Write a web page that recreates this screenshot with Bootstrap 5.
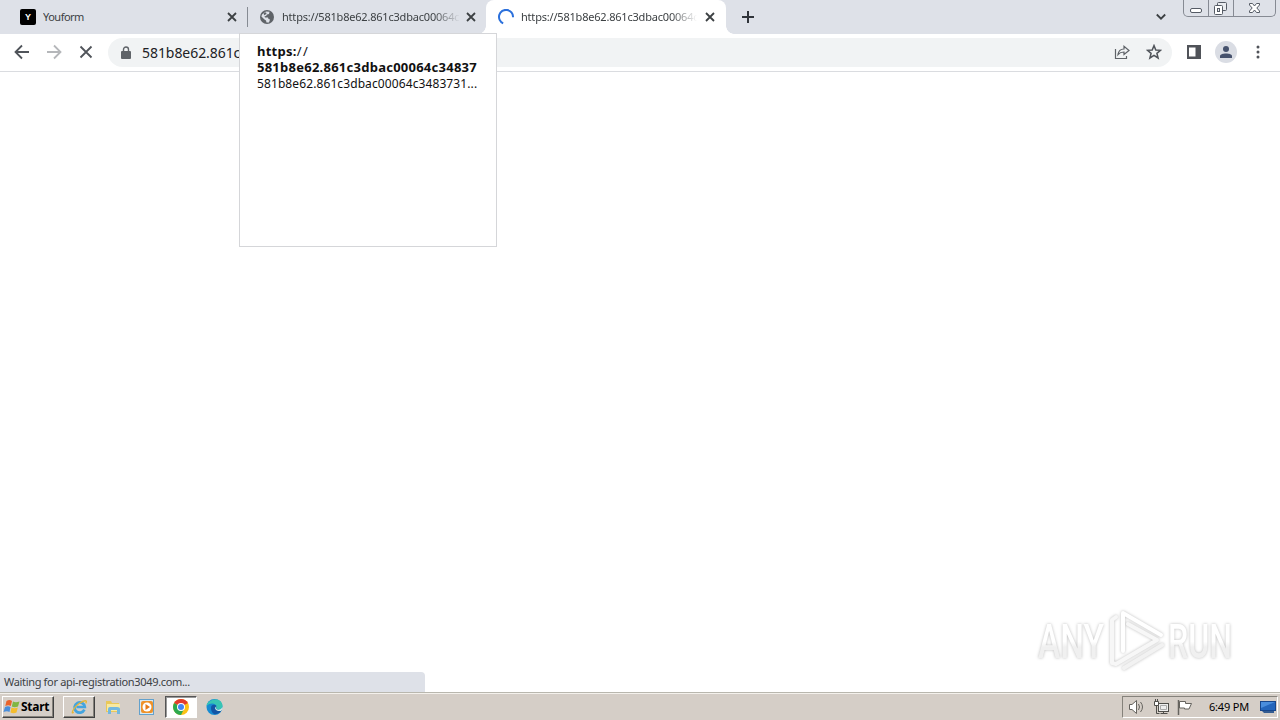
<!DOCTYPE html>
<html lang="en">
<head>
<meta charset="utf-8">
<title>Browser on desktop</title>
<link href="https://cdn.jsdelivr.net/npm/bootstrap@5.3.0/dist/css/bootstrap.min.css" rel="stylesheet">
<script src="https://cdn.jsdelivr.net/npm/bootstrap@5.3.0/dist/js/bootstrap.bundle.min.js" defer></script>
<style>
body{width:1280px;height:720px;overflow:hidden;font-family:"Noto Sans","DejaVu Sans",sans-serif;font-size:11px;line-height:16px;color:#3c4043;background:#fff}
svg{display:block;flex:none}
.strip{height:34px;background:#dee1e8}
.tab{height:34px;width:239px}
.tab-title{white-space:nowrap;overflow:hidden;letter-spacing:-.2px}
.fade-end{-webkit-mask-image:linear-gradient(90deg,#000 85%,transparent);mask-image:linear-gradient(90deg,#000 85%,transparent)}
.tab-on{background:#fff;border-radius:8px 8px 0 0;width:240px}
.tab-on::before,.tab-on::after{content:"";position:absolute;bottom:0;width:8px;height:8px}
.tab-on::before{left:-8px;background:radial-gradient(circle at 0 0,transparent 7.5px,#fff 8px)}
.tab-on::after{right:-8px;background:radial-gradient(circle at 100% 0,transparent 7.5px,#fff 8px)}
.sep{width:1px;height:20px;background:#868b93}
.fav{width:16px;height:16px;background:#000;color:#fff;border-radius:2px;font:bold 9px/16px "Liberation Sans",sans-serif}
.winctl{width:93px;height:17px;border:1px solid #868a93;border-top:0;border-radius:0 0 5px 5px}
.winctl>div+div{border-left:1px solid #868a93}
.tools{height:38px;border-bottom:1px solid #dadce0}
.tools>svg{margin-bottom:2px}
.omni{width:1064px;height:29px;border-radius:15px;background:#f1f3f4;margin-left:14px}
.omni>svg{margin-bottom:1px}
.url{font-size:14px;color:#202124;letter-spacing:-.06px}
.tip{left:239px;top:33px;width:258px;height:214px;background:#fff;border:1px solid #d5d6d9;padding:9px 0 0 17px;color:#111}
.tip-b{font-size:13px;font-weight:700;letter-spacing:.25px}
.tip-u{font-size:12px;letter-spacing:.1px;line-height:18px}
.status{width:425px;height:20px;background:#dee1e8;border-radius:0 4px 0 0;line-height:19px;padding-left:4px;letter-spacing:-.33px}
.task{height:28px;background:#d5cec7;border-top:1px solid #b9b7ae;box-shadow:inset 0 1px #f4f1ec;color:#000;padding-top:1px}
.page-area{margin-bottom:-1px}
.raised{border:1px solid;border-color:#fff #404040 #404040 #fff;box-shadow:inset -1px -1px #85827b;height:22px}
.sunk{border:1px solid;border-color:#555 #fff #fff #555;box-shadow:inset 1px 1px #999;background:#fff;height:22px}
.tray{width:156px;height:22px;border:1px solid;border-color:#85827b #fff #fff #85827b}
.mark-any{left:1030px;top:603px;overflow:visible;filter:drop-shadow(0 0 1.5px #bdbdbd)}
</style>
</head>
<body class="d-flex flex-column">
<header class="strip d-flex flex-shrink-0">
  <div class="tab d-flex align-items-center" style="width:247px;padding-left:20px">
    <div class="fav text-center">Y</div>
    <div class="tab-title flex-grow-1" style="margin-left:7px;letter-spacing:-.5px">Youform</div>
    <svg width="10" height="10" style="margin-right:10px" stroke="#3c4043" stroke-width="1.8"><path d="M1 1 9 9M9 1 1 9"/></svg>
  </div>
  <div class="sep align-self-center"></div>
  <div class="tab d-flex align-items-center" style="width:238px;padding-left:12px">
    <svg width="14" height="14" viewBox="0 0 14 14"><circle cx="7" cy="7" r="7" fill="#5f6368"/><path d="M6 1.5 9.5 1.8 9 4 7 4.5 6 6 4.5 6.3 5 7.5 8 7.5 8.5 9 10 9.5 9 12.4 6.5 12.5 6 10.5 4.5 9.5 1.4 6.5 2 4.5Z" fill="#dee1e8"/><path d="M3.8 3.3 6 2.3 6.5 4 4 5.3Z" fill="#5f6368"/></svg>
    <div class="tab-title fade-end" style="margin-left:8px;width:178px">https://581b8e62.861c3dbac00064c</div>
    <svg width="10" height="10" style="margin-left:6px" stroke="#3c4043" stroke-width="1.8"><path d="M1 1 9 9M9 1 1 9"/></svg>
  </div>
  <div class="tab tab-on d-flex align-items-center position-relative" style="padding-left:12px">
    <svg width="16" height="16" fill="none" stroke="#2b70dc" stroke-width="2"><path d="M5.2 14.3A7 7 0 1 1 15 8.2"/></svg>
    <div class="tab-title fade-end" style="margin-left:7px;width:176px">https://581b8e62.861c3dbac00064c</div>
    <svg width="10" height="10" style="margin-left:8px" stroke="#3c4043" stroke-width="1.8"><path d="M1 1 9 9M9 1 1 9"/></svg>
  </div>
  <svg class="align-self-center" width="12" height="12" style="margin-left:16px" stroke="#30343a" stroke-width="2"><path d="M6 0V12M0 6H12"/></svg>
  <svg class="align-self-center ms-auto" width="10" height="8" style="margin-right:17px" fill="none" stroke="#3c4043" stroke-width="1.8"><path d="M.8 1.5 5 5.7 9.2 1.5"/></svg>
  <div class="winctl d-flex">
    <div style="width:24px"><svg width="24" height="16" fill="#fff" stroke="#555b65"><rect x="6.500" y="8.500" width="11" height="4" rx="1.500"/></svg></div>
    <div style="width:25px"><svg width="24" height="16" fill="#e9ebef" stroke="#555b65"><rect x="8.500" y="2.500" width="9" height="8" rx="1"/><rect x="5.500" y="5.500" width="8" height="9" rx="1" fill="#fff"/><rect x="8.500" y="8.500" width="2" height="3"/></svg></div>
    <div style="width:42px"><svg width="42" height="16" fill="#fff" stroke="#555b65"><path d="M15.500 3.500H18.500L20.500 6 22.500 3.500H25.500V5L22.800 8 25.500 11V12.500H22.500L20.500 10 18.500 12.500H15.500V11L18.200 8 15.500 5Z"/></svg></div>
  </div>
  <div style="width:4px"></div>
</header>
<nav class="tools d-flex align-items-center flex-shrink-0">
  <svg width="94" height="20" fill="none" stroke-width="1.8"><path d="M29 10H16M22 3.500 15.500 10 22 16.500" stroke="#50545a"/><path d="M47 10H60M54 3.500 60.500 10 54 16.500" stroke="#b5b7ba"/><path d="M80.500 4.500 91.500 15.500M91.500 4.500 80.500 15.500" stroke="#50545a"/></svg>
  <div class="omni d-flex align-items-center">
    <svg width="10" height="13" style="margin-left:13px"><rect y="5" width="10" height="8" rx="1" fill="#5f6368"/><path d="M2.500 6V3.500A2.500 2.500 0 0 1 7.500 3.500V6" fill="none" stroke="#5f6368" stroke-width="1.400"/></svg>
    <div class="url flex-grow-1" style="margin-left:11px">581b8e62.861c</div>
    <svg width="16" height="16" viewBox="0 0 16 16" fill="none" stroke="#5f6368" stroke-width="1.2" style="margin-right:16px"><path d="M1.500 5V14.500H12.500V12"/><path d="M4 10.500C4.500 7 6.500 5 10 5V2.300L15 6.500 10 10.500V8C7.500 8 5.500 8.700 4 10.500Z"/></svg>
    <svg width="16" height="16" viewBox="0 0 16 16" fill="none" stroke="#50545a" stroke-width="1.500" style="margin-right:10px"><path d="M8 1.600 9.800 6 14.500 6.300 10.900 9.300 12.100 14 8 11.400 3.900 14 5.100 9.300 1.500 6.300 6.200 6Z"/></svg>
  </div>
  <svg width="14" height="14" style="margin-left:15px"><path d="M0 0H14V14H0ZM2 2.500V11.500H8.500V2.500Z" fill="#505359" fill-rule="evenodd"/></svg>
  <svg width="22" height="22" style="margin-left:14px"><circle cx="11" cy="11" r="11" fill="#dadde4"/><circle cx="11" cy="8" r="3" fill="#46526d"/><path d="M5 17V15C5 11.500 17 11.500 17 15V17Z" fill="#46526d"/></svg>
  <svg width="4" height="14" style="margin-left:19px" fill="#505359"><circle cx="2" cy="2" r="1.500"/><circle cx="2" cy="7" r="1.500"/><circle cx="2" cy="12" r="1.500"/></svg>
</nav>
<main class="page-area flex-grow-1 d-flex align-items-end"><div class="status" style="margin-bottom:1px">Waiting for api-registration3049.com...</div></main>
<footer class="task d-flex align-items-center flex-shrink-0">
  <div class="raised d-flex align-items-center" style="width:52px;margin-left:2px">
    <svg width="18" height="16" viewBox="0 0 17 16"><path d="M3 2Q6 0 8.500 2L7.300 7Q5 5.500 1.800 7Z" fill="#e9632b"/><path d="M9.500 2.500Q12 4 16 2.500L14.500 7.500Q11 9 8.300 7.500Z" fill="#80b642"/><path d="M1.500 8Q4.500 6.500 7 8L6 13Q3.500 11.500 0 13Z" fill="#498edb"/><path d="M8 8.500Q11 10 14.300 8.500L13 13.500Q10 15 7 13.500Z" fill="#f5bd2d"/></svg>
    <b style="font-size:12px;letter-spacing:-.25px">Start</b>
  </div>
  <div class="raised d-flex justify-content-center align-items-center" style="width:32px;margin-left:9px">
    <svg width="17" height="16" viewBox="0 0 19 18" fill="none"><path d="M15 12A5.800 5.800 0 1 1 15.500 9H6" stroke="#43a4df" stroke-width="3"/><path d="M3 15C-1 18 3 9 9 5S19 1 16.500 5" stroke="#e6b635" stroke-width="1.500"/></svg>
  </div>
  <svg width="16" height="16" style="margin-left:10px"><path d="M1 2H6L7 4H14V13H1Z" fill="#e9c85a"/><path d="M2 5H15V12H2Z" fill="#f8e9a0"/><path d="M3 15V10Q3 8 5 8H12Q15 8 15 10V15H12V11H6V15Z" fill="#73b8df"/></svg>
  <svg width="16" height="16" style="margin-left:18px"><rect x=".5" y=".5" width="14" height="15" fill="#d8e9f2" stroke="#63a1cc"/><rect x="2" y="2" width="12" height="12" rx="2" fill="#ef922a"/><circle cx="8" cy="8" r="4.500" fill="#fff"/><path d="M6.500 5 11 8 6.500 11Z" fill="#e57917"/></svg>
  <div class="sunk d-flex justify-content-center align-items-center" style="width:32px;margin-left:10px">
    <svg width="16" height="16" viewBox="0 0 16 16"><circle cx="8" cy="8" r="8" fill="#fbc116"/><path d="M8 8 1.100 4A8 8 0 0 1 14.900 4Z" fill="#e33b2e"/><path d="M1.100 4A8 8 0 0 0 8 16L11 10 8 8Z" fill="#2da94f"/><circle cx="8" cy="8" r="4" fill="#fff"/><circle cx="8" cy="8" r="3" fill="#4285f4"/></svg>
  </div>
  <svg width="17" height="16" viewBox="0 0 17 16" style="margin-left:9px"><circle cx="8.500" cy="8" r="8" fill="#168bd2"/><path d="M.5 7C1 0 16 -3 16.500 7Q16 11 11 10.500Q9.500 10 10.500 8C10.500 4 4 3 .5 7Z" fill="#37c5b4"/><path d="M5 9C5 5 9 5 10.500 7Q9 10 12 11Q14 12 16 10.500Q13 16 8 15Q5 13 5 9Z" fill="#1355a5"/><path d="M10.500 7Q9 10 12 10.700Q15 11 16.500 8V10L15 12H12Q7 10 10.500 7Z" fill="#d5e9e6"/></svg>
  <div class="tray d-flex align-items-center ms-auto" style="margin-right:2px">
    <svg width="17" height="16" style="margin-left:5px" fill="#fff" stroke="#65635e"><path d="M1.500 5.500H4L8.500 1.500V14.500L4 10.500H1.500Z"/><path d="M10.500 5Q12.500 8 10.500 11M12.500 3Q16.500 8 12.500 13" fill="none"/></svg>
    <svg width="17" height="16" style="margin-left:8px" fill="#eee" stroke="#4f4e4a"><rect x="5.500" y="4.500" width="10" height="8"/><path d="M7.500 6.500H13.500V10.500H7.500Z" stroke="#aaa"/><path d="M10.500 12.500V14.500M7.500 14.500H14.500M3.500 6.500V14.500H6.500" fill="none"/><path d="M1.500 2.500H5.500V6.500H1.500ZM2.500 0V2M4.500 0V2" fill="#fff"/></svg>
    <svg width="16" height="16" style="margin-left:7px" fill="#fff" stroke="#65635e"><path d="M1.500 1V16" stroke-width="1.500"/><path d="M2.500 2.500H8.500V4.500H14.500L12 10H7.500V9H2.500Z"/></svg>
    <div style="margin-left:16px;width:50px;letter-spacing:-.2px">6:49 PM</div>
    <svg width="16" height="14" style="margin-left:1px"><rect x=".5" y="1.500" width="15" height="9" fill="#2365bb" stroke="#17468b"/><path d="M1 2H15L1 8Z" fill="#498ddc"/><path d="M2 11H14V13H4Z" fill="#345c91"/></svg>
  </div>
</footer>
<aside class="tip position-absolute">
  <div class="tip-b">https:<span class="fw-normal" style="letter-spacing:1.5px">//</span></div>
  <div class="tip-b">581b8e62.861c3dbac00064c34837</div>
  <div class="tip-u">581b8e62.861c3dbac00064c3483731...</div>
</aside>
<svg class="mark-any position-absolute" width="215" height="76">
  <defs><linearGradient id="fadeGrey" x1="0" y1="0" x2="0" y2="1"><stop offset=".5" stop-color="#fff"/><stop offset=".6" stop-color="#f0f0f0"/></linearGradient></defs>
  <g font-family="Roboto,sans-serif" font-size="48" font-weight="500" fill="url(#fadeGrey)"><text x="8" y="55" textLength="66" lengthAdjust="spacingAndGlyphs">ANY</text><text x="138" y="55" textLength="64" lengthAdjust="spacingAndGlyphs">RUN</text></g>
  <g fill="none" stroke-width="4" stroke-linejoin="round" stroke-linecap="round"><path d="M94 65 132 42" stroke="#f2f2f2"/><path d="M86 14 82 17V60L86 61 127 37 98 21" stroke="#f7f7f7"/><path d="M93 48V10L131 32" stroke="#fff"/></g>
</svg>
</body>
</html>
